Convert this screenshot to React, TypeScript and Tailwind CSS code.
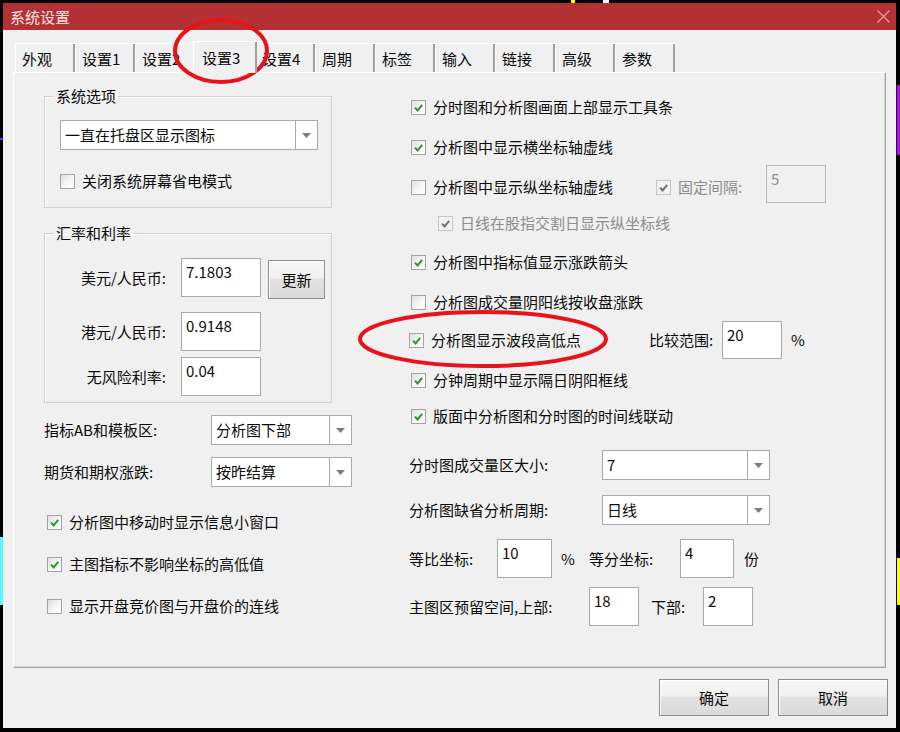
import React from "react";

type BoxProps = { checked?: boolean; disabled?: boolean };

function Box({ checked, disabled }: BoxProps) {
  return (
    <span
      className={`flex h-[15px] w-[15px] shrink-0 items-center justify-center border ${
        disabled
          ? "border-[#c6c6c6] bg-[#f2f2f2]"
          : "border-[#a3a3a3] bg-[linear-gradient(135deg,#dedede,#f7f7f7_55%,#ffffff)]"
      }`}
    >
      {checked && (
        <svg viewBox="0 0 13 13" className="h-[13px] w-[13px]">
          <path
            d="M3 6.6l2.6 2.9L10.2 3.8"
            fill="none"
            stroke={disabled ? "#707070" : "#1e9b2b"}
            strokeWidth="2"
          />
        </svg>
      )}
    </span>
  );
}

function Check({
  label,
  checked,
  disabled,
  className = "",
}: BoxProps & { label: string; className?: string }) {
  return (
    <div className={`flex h-[20px] items-center gap-[7px] ${className}`}>
      <Box checked={checked} disabled={disabled} />
      <span className={`whitespace-nowrap ${disabled ? "text-[#8c8c8c]" : ""}`}>{label}</span>
    </div>
  );
}

function Field({ value, className = "", disabled }: { value: string; className?: string; disabled?: boolean }) {
  return (
    <div
      className={`shrink-0 border px-[4px] pt-[3px] leading-[20px] ${
        disabled ? "border-[#b9b9b9] bg-[#f0f0f0] text-[#8c8c8c]" : "border-[#a9a9a9] bg-white"
      } ${className}`}
    >
      {value}
    </div>
  );
}

function Combo({ value, className = "" }: { value: string; className?: string }) {
  return (
    <div className={`flex h-[30px] shrink-0 border border-[#a9a9a9] bg-white ${className}`}>
      <div className="flex flex-1 items-center pl-[4px]">{value}</div>
      <div className="flex w-[22px] items-center justify-center border-l border-[#a9a9a9]">
        <svg width="9" height="5" viewBox="0 0 9 5">
          <path d="M0 0h9L4.5 5z" fill="#7c7c7c" />
        </svg>
      </div>
    </div>
  );
}

function Button({ label, className = "" }: { label: string; className?: string }) {
  return (
    <div
      className={`flex shrink-0 items-center justify-center border border-[#8d8d8d] bg-[linear-gradient(#f7f7f7,#f0f0f0_45%,#e2e2e2_50%,#dadada)] shadow-[inset_1px_1px_0_#ffffff] ${className}`}
    >
      {label}
    </div>
  );
}

const tabs = ["外观", "设置1", "设置2", "设置3", "设置4", "周期", "标签", "输入", "链接", "高级", "参数"];

export default function App() {
  return (
    <div className="relative h-[732px] w-[900px] overflow-hidden bg-black pl-[3px] pt-[3px] font-['Noto_Sans_CJK_SC',sans-serif] text-[15px] leading-[20px] text-[#0a0a0a]">
      {/* chart behind the dialog */}
      <div className="absolute left-0 top-[537px] h-[68px] w-[3px] bg-[#5ff5ff]" />
      <div className="absolute left-0 top-[138px] h-[2px] w-[3px] bg-[#3040ff]" />
      <div className="absolute right-0 top-[85px] h-[70px] w-[3px] bg-[#c400ff]" />
      <div className="absolute right-0 top-[558px] h-[47px] w-[3px] bg-[#ffff00]" />
      <div className="absolute left-[571px] top-0 h-[3px] w-[4px] bg-[#ffff00]" />
      <div className="absolute left-[603px] top-0 h-[3px] w-[6px] bg-[#ffffff]" />

      <div className="flex h-[725px] w-[893px] flex-col">
        {/* title bar */}
        <div className="flex h-[27px] shrink-0 items-center justify-between bg-[#b33035] pl-[7px] pr-[6px]">
          <span className="text-[#f6e4e4]">系统设置</span>
          <svg width="13" height="13" viewBox="0 0 13 13">
            <path d="M0.5 0.5l12 12M12.5 0.5l-12 12" stroke="#e39a9d" strokeWidth="1.2" />
          </svg>
        </div>

        <div className="flex flex-1 flex-col bg-[#f0f0f0] px-[10px] pt-[11px]">
          {/* tabs */}
          <div className="flex h-[31px] items-end pl-[2px]">
            {tabs.map((t) =>
              t === "设置3" ? (
                <div
                  key={t}
                  className="relative z-10 -mx-[2px] -mb-[1px] flex h-[32px] w-[64px] items-center border-l border-t border-white bg-[#f0f0f0] pl-[8px] shadow-[inset_-2px_0_0_#a0a0a0]"
                >
                  {t}
                </div>
              ) : (
                <div
                  key={t}
                  className="flex h-[29px] w-[60px] items-center border-l border-t border-white bg-[#f0f0f0] pl-[6px] pt-[2px] shadow-[inset_-2px_0_0_#a0a0a0]"
                >
                  {t}
                </div>
              ),
            )}
          </div>

          {/* page */}
          <div className="flex h-[596px] border border-b-[#a0a0a0] border-l-white border-r-[#a0a0a0] border-t-white shadow-[inset_-1px_-1px_0_#d6d6d6]">
            {/* left column */}
            <div className="ml-[30px] flex w-[308px] flex-col">
              <fieldset className="mt-[13px] h-[122px] w-[288px] border border-[#d0d0d0] shadow-[inset_1px_1px_0_#ffffff]">
                <legend className="ml-[9px] px-[2px] leading-[20px]">系统选项</legend>
                <Combo value="一直在托盘区显示图标" className="ml-[15px] mt-[14px] w-[258px]" />
                <Check label="关闭系统屏幕省电模式" className="ml-[15px] mt-[21px]" />
              </fieldset>

              <fieldset className="mt-[15px] h-[180px] w-[288px] border border-[#d0d0d0] shadow-[inset_1px_1px_0_#ffffff]">
                <legend className="ml-[9px] px-[2px] leading-[20px]">汇率和利率</legend>
                <div className="mt-[13px] flex items-center">
                  <span className="w-[121px] text-right">美元/人民币:</span>
                  <Field value="7.1803" className="ml-[15px] h-[39px] w-[80px]" />
                  <Button label="更新" className="ml-[7px] mt-[4px] h-[39px] w-[57px]" />
                </div>
                <div className="mt-[13px] flex items-center">
                  <span className="w-[121px] text-right">港元/人民币:</span>
                  <Field value="0.9148" className="ml-[15px] h-[39px] w-[80px]" />
                </div>
                <div className="mt-[6px] flex items-center">
                  <span className="w-[121px] text-right">无风险利率:</span>
                  <Field value="0.04" className="ml-[15px] h-[39px] w-[80px]" />
                </div>
              </fieldset>

              <div className="mt-[12px] flex items-center">
                <span className="w-[167px]">指标AB和模板区:</span>
                <Combo value="分析图下部" className="w-[141px]" />
              </div>
              <div className="mt-[12px] flex items-center">
                <span className="w-[167px]">期货和期权涨跌:</span>
                <Combo value="按昨结算" className="w-[141px]" />
              </div>

              <Check label="分析图中移动时显示信息小窗口" checked className="ml-[3px] mt-[25px]" />
              <Check label="主图指标不影响坐标的高低值" checked className="ml-[3px] mt-[22px]" />
              <Check label="显示开盘竞价图与开盘价的连线" className="ml-[3px] mt-[22px]" />
            </div>

            {/* right column */}
            <div className="ml-[57px] flex flex-col">
              <Check label="分时图和分析图画面上部显示工具条" checked className="ml-[2px] mt-[24px]" />
              <Check label="分析图中显示横坐标轴虚线" checked className="ml-[2px] mt-[20px]" />
              <div className="ml-[2px] mt-[20px] flex h-[20px] items-center">
                <Check label="分析图中显示纵坐标轴虚线" className="w-[245px]" />
                <Check label="固定间隔:" checked disabled className="w-[110px]" />
                <Field value="5" disabled className="mb-[6px] h-[38px] w-[60px]" />
              </div>
              <Check label="日线在股指交割日显示纵坐标线" checked disabled className="ml-[29px] mt-[16px]" />
              <Check label="分析图中指标值显示涨跌箭头" checked className="ml-[2px] mt-[19px]" />
              <Check label="分析图成交量阴阳线按收盘涨跌" className="ml-[2px] mt-[20px]" />
              <div className="mt-[18px] flex h-[20px] items-center">
                <Check label="分析图显示波段高低点" checked className="w-[240px]" />
                <span className="w-[73px]">比较范围:</span>
                <Field value="20" className="h-[38px] w-[60px]" />
                <span className="ml-[9px]">%</span>
              </div>
              <Check label="分钟周期中显示隔日阴阳框线" checked className="ml-[2px] mt-[20px]" />
              <Check label="版面中分析图和分时图的时间线联动" checked className="ml-[2px] mt-[16px]" />

              <div className="mt-[24px] flex items-center">
                <span className="w-[193px]">分时图成交量区大小:</span>
                <Combo value="7" className="w-[168px]" />
              </div>
              <div className="mt-[15px] flex items-center">
                <span className="w-[193px]">分析图缺省分析周期:</span>
                <Combo value="日线" className="w-[168px]" />
              </div>
              <div className="mt-[14px] flex items-center">
                <span className="w-[88px]">等比坐标:</span>
                <Field value="10" className="h-[39px] w-[55px]" />
                <span className="ml-[9px] w-[28px]">%</span>
                <span className="w-[91px]">等分坐标:</span>
                <Field value="4" className="h-[39px] w-[54px]" />
                <span className="ml-[10px]">份</span>
              </div>
              <div className="mt-[9px] flex items-center">
                <span className="w-[180px]">主图区预留空间,上部:</span>
                <Field value="18" className="h-[39px] w-[50px]" />
                <span className="ml-[12px] w-[52px]">下部:</span>
                <Field value="2" className="h-[39px] w-[50px]" />
              </div>
            </div>
          </div>

          {/* buttons */}
          <div className="-mr-[2px] mt-[11px] flex justify-end gap-[9px]">
            <Button label="确定" className="h-[37px] w-[110px]" />
            <Button label="取消" className="h-[37px] w-[110px]" />
          </div>
        </div>
      </div>

      {/* red annotation rings */}
      <svg className="pointer-events-none absolute left-0 top-0" width="900" height="732">
        <ellipse cx="221" cy="51" rx="46" ry="31" fill="none" stroke="#e8121b" strokeWidth="4" />
        <ellipse cx="483" cy="339" rx="123" ry="27" fill="none" stroke="#e8121b" strokeWidth="4" />
      </svg>
    </div>
  );
}
